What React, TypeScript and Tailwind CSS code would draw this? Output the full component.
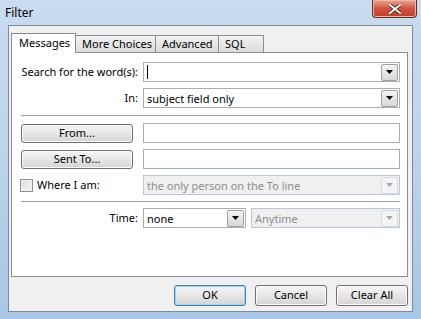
import React from 'react';

const font = { fontFamily: '"Noto Sans", "Open Sans", sans-serif' };

const Arrow = ({ disabled }: { disabled?: boolean }) => (
  <div
    className={`flex h-[17px] w-[17px] shrink-0 items-center justify-center rounded-[2px] border ${
      disabled ? 'border-[#d5dbe3] bg-[#f4f4f4]' : 'border-[#a0a0a0] bg-gradient-to-b from-[#f4f4f4] to-[#d8d8d8]'
    }`}
  >
    <svg width="7" height="4" viewBox="0 0 7 4">
      <path d="M0 0h7L3.5 4z" fill={disabled ? '#a8a8a8' : '#000'} />
    </svg>
  </div>
);

const Combo = ({ value, disabled, caret, className = '' }: { value?: string; disabled?: boolean; caret?: boolean; className?: string }) => (
  <div
    className={`flex h-[20px] items-center justify-between border pl-[3px] pr-[1px] ${
      disabled ? 'border-[#bcc7d6] bg-[#f0f0f0] text-[#8d8d8d]' : 'border-[#abadb3] bg-white text-black'
    } ${className}`}
  >
    <span className="flex items-center whitespace-nowrap leading-none">
      {caret && <span className="h-[14px] w-px bg-black" />}
      {value}
    </span>
    <Arrow disabled={disabled} />
  </div>
);

const Btn = ({ children, className = '', primary }: { children: React.ReactNode; className?: string; primary?: boolean }) => (
  <div
    className={`flex shrink-0 items-center justify-center rounded-[3px] border bg-gradient-to-b from-[#f6f6f6] via-[#e6e6e6] to-[#d4d4d4] text-black ${
      primary ? 'border-[#3c7fb1] shadow-[inset_0_0_0_1px_#9fd5f5]' : 'border-[#707070] shadow-[inset_0_0_0_1px_#fcfcfc]'
    } ${className}`}
  >
    {children}
  </div>
);

const Tab = ({ label, active, w }: { label: string; active?: boolean; w: string }) => (
  <div
    className={`flex items-center whitespace-nowrap border border-b-0 border-[#898c95] ${w} ${
      active
        ? 'relative z-10 -mb-px h-[20px] bg-white pb-[1px] pl-[7px]'
        : '-ml-px h-[17px] bg-gradient-to-b from-[#f3f3f3] to-[#dcdcdc] pl-[6px]'
    }`}
  >
    {label}
  </div>
);

// right-aligned label column, ends 5px before the field column
const Label = ({ children }: { children: React.ReactNode }) => (
  <div className="flex w-[122px] shrink-0 justify-end whitespace-nowrap pr-[5px]">{children}</div>
);

export default function App() {
  return (
    <div
      className="flex h-[319px] w-[421px] flex-col overflow-hidden bg-gradient-to-b from-[#c9dcf0] via-[#bcd3ea] to-[#a9c6e6] text-[11px]"
      style={font}
    >
      {/* Title bar */}
      <div className="flex h-[25px] shrink-0 items-start justify-between pl-[5px] pr-[4px]">
        <span className="mt-[4px] text-[12px] text-black">Filter</span>
        <div className="flex h-[18px] w-[45px] items-center justify-center rounded-b-[4px] border border-t-0 border-[#6b2a22] bg-gradient-to-b from-[#e8a493] via-[#d0543f] to-[#c33b27] shadow-[inset_0_0_0_1px_#f0b8a8]">
          <svg width="12" height="10" viewBox="0 0 12 10">
            <path d="M1 1l10 8M11 1L1 9" stroke="#3a1a14" strokeWidth="3.6" strokeLinecap="square" />
            <path d="M1 1l10 8M11 1L1 9" stroke="#fff" strokeWidth="2" strokeLinecap="square" />
          </svg>
        </div>
      </div>

      {/* Client */}
      <div className="mx-[8px] flex h-[287px] flex-col border border-[#7d8a99] bg-[#f0f0f0] pl-[2px] pr-[4px] pt-[7px]">
        <div className="flex items-end">
          <Tab label="Messages" active w="w-[65px]" />
          <Tab label="More Choices" w="w-[81px]" />
          <Tab label="Advanced" w="w-[64px]" />
          <Tab label="SQL" w="w-[46px]" />
        </div>
        <div className="flex h-[225px] flex-col border border-[#898c95] bg-white pl-[9px] pr-[7px] pt-[9px]">
          <div className="flex h-[20px] items-center">
            <Label>Search for the word(s):</Label>
            <Combo caret className="flex-1" />
          </div>
          <div className="mt-[6px] flex h-[20px] items-center">
            <Label>In:</Label>
            <Combo value="subject field only" className="flex-1" />
          </div>
          <div className="mt-[7px] h-px shrink-0 bg-[#a0a0a0]" />
          <div className="mt-[7px] flex h-[20px] items-center">
            <Btn className="h-[19px] w-[112px]">From...</Btn>
            <div className="ml-[10px] h-[20px] flex-1 border border-[#abadb3] bg-white" />
          </div>
          <div className="mt-[6px] flex h-[20px] items-center">
            <Btn className="h-[19px] w-[112px]">Sent To...</Btn>
            <div className="ml-[10px] h-[20px] flex-1 border border-[#abadb3] bg-white" />
          </div>
          <div className="mt-[6px] flex h-[20px] items-center">
            <div className="flex w-[122px] shrink-0 items-center">
              <span className="-ml-px h-[13px] w-[13px] border border-[#8e8f8f] bg-gradient-to-br from-[#dcdcdc] to-[#f6f6f6] shadow-[inset_0_0_0_1px_#f4f4f4]" />
              <span className="ml-[4px]">Where I am:</span>
            </div>
            <Combo value="the only person on the To line" disabled className="flex-1" />
          </div>
          <div className="mt-[6px] h-px shrink-0 bg-[#a0a0a0]" />
          <div className="mt-[6px] flex h-[20px] items-center">
            <Label>Time:</Label>
            <Combo value="none" className="w-[103px]" />
            <Combo value="Anytime" disabled className="ml-[5px] flex-1" />
          </div>
        </div>
        <div className="mt-[8px] flex justify-end gap-[9px]">
          <Btn primary className="h-[21px] w-[72px]">OK</Btn>
          <Btn className="h-[21px] w-[72px]">Cancel</Btn>
          <Btn className="h-[21px] w-[72px]">Clear All</Btn>
        </div>
      </div>
    </div>
  );
}
